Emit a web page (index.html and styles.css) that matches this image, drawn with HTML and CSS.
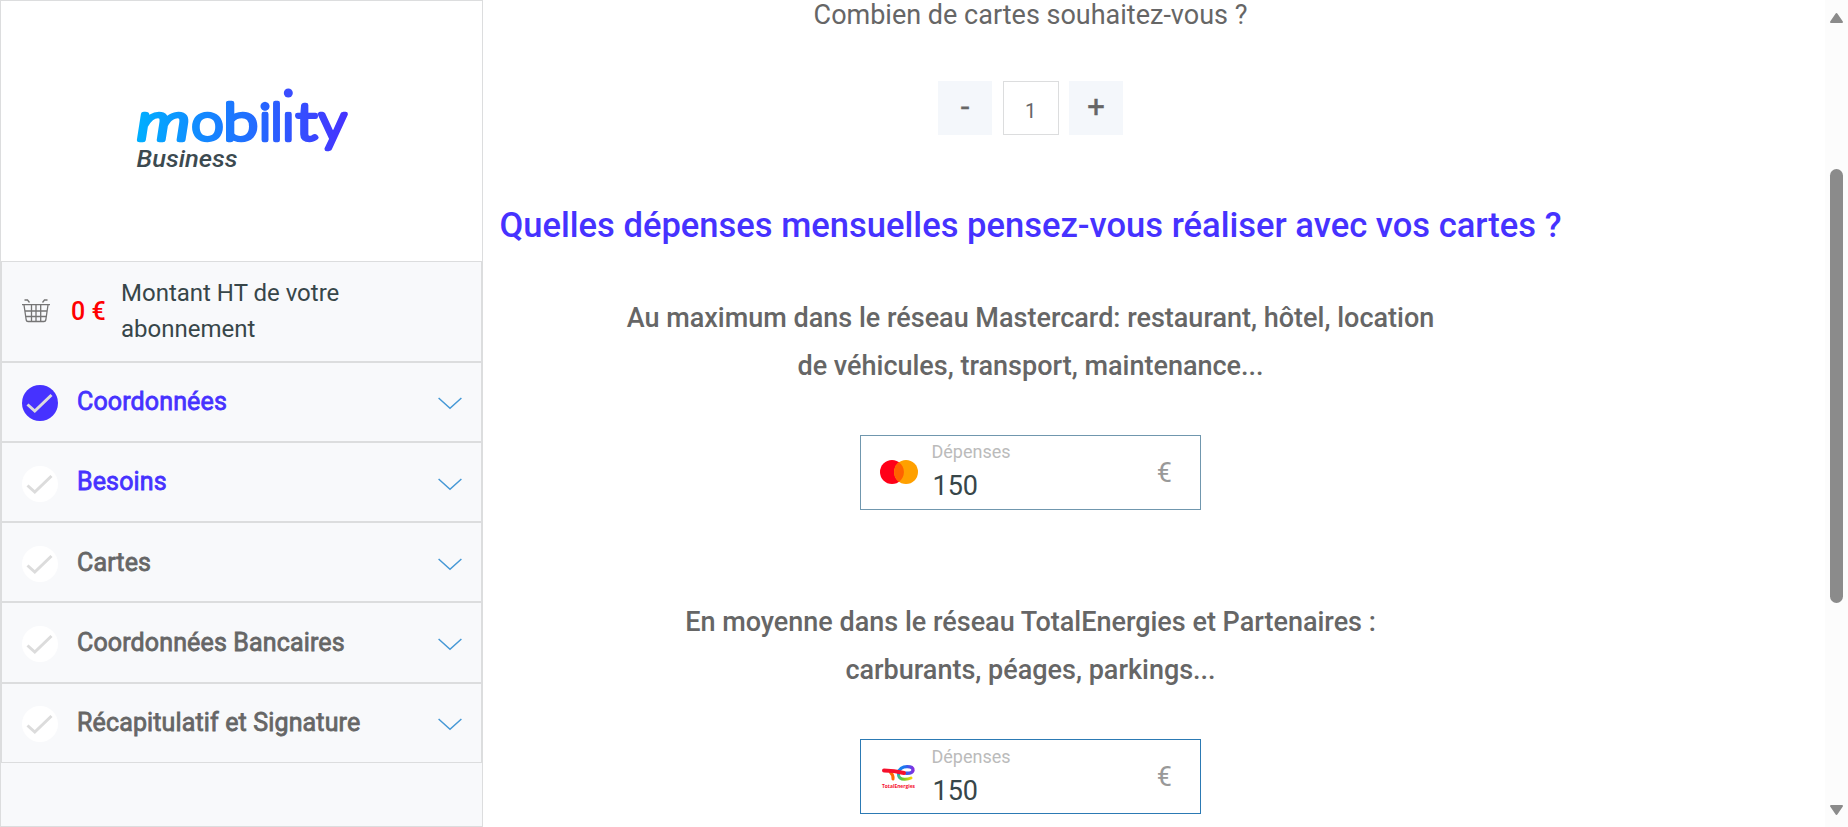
FILE: index.html
```html
<!DOCTYPE html>
<html lang="fr">
<head>
<meta charset="utf-8">
<title>Mobility Business</title>
<link rel="stylesheet" href="styles.css">
</head>
<body>
<svg width="0" height="0" class="defs">
  <symbol id="check" viewBox="0 0 36 36"><path d="M5.5 19.5 12.8 26 29.5 10" fill="none" stroke="#dcdcdc" stroke-width="3"/></symbol>
  <symbol id="chevron" viewBox="0 0 24 13"><path d="M.6 1 12 11.3 23.4 1" fill="none" stroke="#4598d6" stroke-width="1.5"/></symbol>
</svg>
<div class="page">
  <aside class="sidebar">
    <div class="brand">
      <svg width="250" height="120" viewBox="0 0 250 120">
        <defs>
          <linearGradient id="g" gradientUnits="userSpaceOnUse" x1="18" y1="60" x2="227" y2="60"><stop offset="0" stop-color="#00aeff"/><stop offset=".5" stop-color="#1f72ff"/><stop offset="1" stop-color="#4632ff"/></linearGradient>
          <clipPath id="stem"><path d="M0 0H163V41.500H175V0H250V120H0Z"/></clipPath>
        </defs>
        <g clip-path="url(#stem)">
          <text class="wordmark" y="70" fill="url(#g)" stroke="url(#g)"><tspan class="slant" x="17" textLength="53" lengthAdjust="spacingAndGlyphs">m</tspan><tspan x="71.500" textLength="32" lengthAdjust="spacingAndGlyphs">o</tspan><tspan x="103.500" textLength="34.500" lengthAdjust="spacingAndGlyphs">b</tspan><tspan x="139.300">i</tspan><tspan x="150.800">l</tspan><tspan x="162.500">i</tspan><tspan x="176" textLength="21" lengthAdjust="spacingAndGlyphs">t</tspan><tspan x="199" textLength="27.500" lengthAdjust="spacingAndGlyphs">y</tspan></text>
        </g>
        <circle cx="168.3" cy="23" r="4.5" fill="#3a4dff"/>
        <text class="subbrand" x="16.500" y="96.500" textLength="101" lengthAdjust="spacingAndGlyphs">Business</text>
      </svg>
    </div>
    <div class="total">
      <svg class="basket" width="28" height="24" viewBox="0 0 28 24" fill="none" stroke="#757575" stroke-width="1.3">
        <path d="M0 5.600H28M2 6 4.200 21Q4.500 22.500 6 22.500H22Q23.500 22.500 23.800 21L26 6M3 12H25M4 17.500H24M9.500 6V22M14 6V22M18.700 6V22M2.500 1H5.500L7.500 3.500M25.500 1H22.500L20.500 3.500"/>
      </svg>
      <strong class="amount">0 €</strong>
      <span class="label">Montant HT de votre abonnement</span>
    </div>
    <div class="step active done"><svg class="dot"><use href="#check"/></svg><span>Coordonnées</span><svg class="chev"><use href="#chevron"/></svg></div>
    <div class="step active"><svg class="dot"><use href="#check"/></svg><span>Besoins</span><svg class="chev"><use href="#chevron"/></svg></div>
    <div class="step"><svg class="dot"><use href="#check"/></svg><span>Cartes</span><svg class="chev"><use href="#chevron"/></svg></div>
    <div class="step"><svg class="dot"><use href="#check"/></svg><span>Coordonnées Bancaires</span><svg class="chev"><use href="#chevron"/></svg></div>
    <div class="step"><svg class="dot"><use href="#check"/></svg><span>Récapitulatif et Signature</span><svg class="chev"><use href="#chevron"/></svg></div>
  </aside>
  <main class="content">
    <p class="question">Combien de cartes souhaitez-vous ?</p>
    <div class="stepper"><div class="btn">-</div><div class="qty">1</div><div class="btn">+</div></div>
    <h2>Quelles dépenses mensuelles pensez-vous réaliser avec vos cartes ?</h2>
    <p class="network">Au maximum dans le réseau Mastercard: restaurant, hôtel, location<br>de véhicules, transport, maintenance...</p>
    <div class="field">
      <svg class="logo" width="38" height="24" viewBox="0 0 38 24"><circle cx="12" cy="12" r="12" fill="#ff0018"/><circle cx="26" cy="12" r="12" fill="#ffa000"/><path d="M19 2.300a12 12 0 0 1 0 19.400a12 12 0 0 1 0-19.400" fill="#ff6200"/></svg>
      <div class="entry"><small>Dépenses</small><span>150</span></div>
      <span class="euro">€</span>
    </div>
    <p class="network">En moyenne dans le réseau TotalEnergies et Partenaires :<br>carburants, péages, parkings...</p>
    <div class="field blue">
      <svg class="logo total-logo" width="38" height="30" viewBox="0 0 38 30">
        <defs><linearGradient id="e" gradientUnits="userSpaceOnUse" x1="15" y1="0" x2="34" y2="0"><stop offset="0" stop-color="#1596e8"/><stop offset=".5" stop-color="#1b72f0"/><stop offset="1" stop-color="#8a2be0"/></linearGradient>
        <linearGradient id="y" gradientUnits="userSpaceOnUse" x1="16" y1="0" x2="32" y2="0"><stop offset="0" stop-color="#20b8c8"/><stop offset=".4" stop-color="#62c830"/><stop offset="1" stop-color="#ffd500"/></linearGradient></defs>
        <g fill="none" stroke-linecap="round">
          <path d="M18.500 9.500C18 13.500 21 15.500 25 15.300Q28.500 15.300 31 14" stroke="url(#y)" stroke-width="3"/>
          <path d="M10.500 8.500Q13.500 11 13 15" stroke="#ff6a00" stroke-width="3"/>
          <path d="M18.500 9C19 5 22.500 2.600 27 2.600Q33.500 2.500 33 6.500Q32 9.600 26 9.200" stroke="url(#e)" stroke-width="3.400"/>
          <path d="M4 6.500Q14 6.500 24 9" stroke="#f5102c" stroke-width="4"/>
        </g>
        <text class="te" x="2" y="24" textLength="33" lengthAdjust="spacingAndGlyphs">TotalEnergies</text>
      </svg>
      <div class="entry"><small>Dépenses</small><span>150</span></div>
      <span class="euro">€</span>
    </div>
  </main>
  <div class="scroll">
    <svg width="15" height="12" viewBox="0 0 15 12"><path d="M2 10H13L7.500 2Z"/></svg>
    <div class="thumb"></div>
    <svg width="15" height="12" viewBox="0 0 15 12"><path d="M2 2H13L7.500 10Z"/></svg>
  </div>
</div>
</body>
</html>
```
FILE: styles.css
```css
* { box-sizing: border-box; }
body { margin: 0; background: #fff; font-family: Roboto, "Liberation Sans", sans-serif; color: #666; }
.defs { position: absolute; }
.page { display: flex; height: 827px; overflow: hidden; }

.sidebar { width: 483px; flex: none; border: 1px solid #dcddde; background: #f8f9fb; }
.brand { height: 260px; background: #fff; padding: 69px 0 0 119px; }
.brand svg { display: block; }
.wordmark { font: 300 52px Lato, sans-serif; stroke-width: 4.400px; stroke-linejoin: round; }
.slant { font-style: italic; }
.subbrand { font: italic 500 23px Roboto, sans-serif; fill: #3c4a50; }
.total, .step { display: flex; align-items: center; border: 1px solid #dcddde; }
.total { height: 100.800px; padding-left: 20px; }
.basket { flex: none; }
.amount { width: 50px; margin: 1px 0 0 21px; flex: none; color: #f00; font-weight: 500; font-size: 25px; line-height: 36px; }
.label { width: 260px; margin-top: -1px; color: #374649; font-size: 24px; line-height: 36px; }
.step { height: 80.200px; padding: 3px 19px 0 20px; font-size: 25px; font-weight: 400; -webkit-text-stroke: .8px currentColor; letter-spacing: .14px; }
.step span { flex: 1; margin: -3.300px 0 0 19px; }
.step.active { color: #4632ff; }
.dot { width: 36px; height: 36px; border-radius: 50%; background: #fff; }
.done .dot { background: #4632ff; }
.chev { width: 24px; height: 13px; margin-top: 1px; }

.content { width: 1095px; flex: none; display: flex; flex-direction: column; align-items: center; }
.content p, .content h2 { margin: 0; text-align: center; }
.question { font-size: 27px; line-height: 30px; }
.stepper { display: flex; gap: 10.500px; margin-top: 51px; }
.btn, .qty { height: 54px; text-align: center; }
.btn { width: 54px; background: #f4f7fb; font-size: 31px; line-height: 52px; -webkit-text-stroke: .4px currentColor; }
.qty { width: 56px; border: 1px solid #dcddde; font-size: 20px; line-height: 59px; }
.content h2 { margin-top: 62px; color: #4632ff; font-size: 34.550px; font-weight: 500; line-height: 56px; height: 54px; white-space: nowrap; }
.network { font-size: 27px; font-weight: 500; line-height: 48px; white-space: nowrap; }
h2 + .network { padding-top: 43px; }
.field + .network { padding-top: 88px; }
.field { width: 341px; height: 75px; margin-top: 45px; border: 1px solid #7097ae; display: flex; align-items: center; padding: 0 28px 0 19px; }
.field.blue { border-color: #2c7ab4; }
.logo { margin-top: -2px; overflow: visible; }
.total-logo { margin-top: 4px; }
.entry { flex: 1; margin-top: -2px; padding-left: 13.500px; display: flex; flex-direction: column; }
.entry small { color: #bbb; font-size: 18px; line-height: 28px; }
.entry span { color: #374649; font-size: 27px; line-height: 40px; padding-left: 1px; }
.blue .entry { margin-top: 0; }
.euro { color: #999; font-size: 27px; }
.te { font: 700 6px "Open Sans", sans-serif; fill: #f5102c; }

.scroll { width: 23px; margin-left: auto; background: #fcfcfc; display: flex; flex-direction: column; align-items: center; padding: 12px 0 11px; fill: #8b8b8b; }
.scroll svg { stroke: #8b8b8b; stroke-width: 2; stroke-linejoin: round; }
.thumb { width: 13px; height: 434px; margin: 145px 0 auto; border-radius: 7px; background: #8b8b8b; }
```
